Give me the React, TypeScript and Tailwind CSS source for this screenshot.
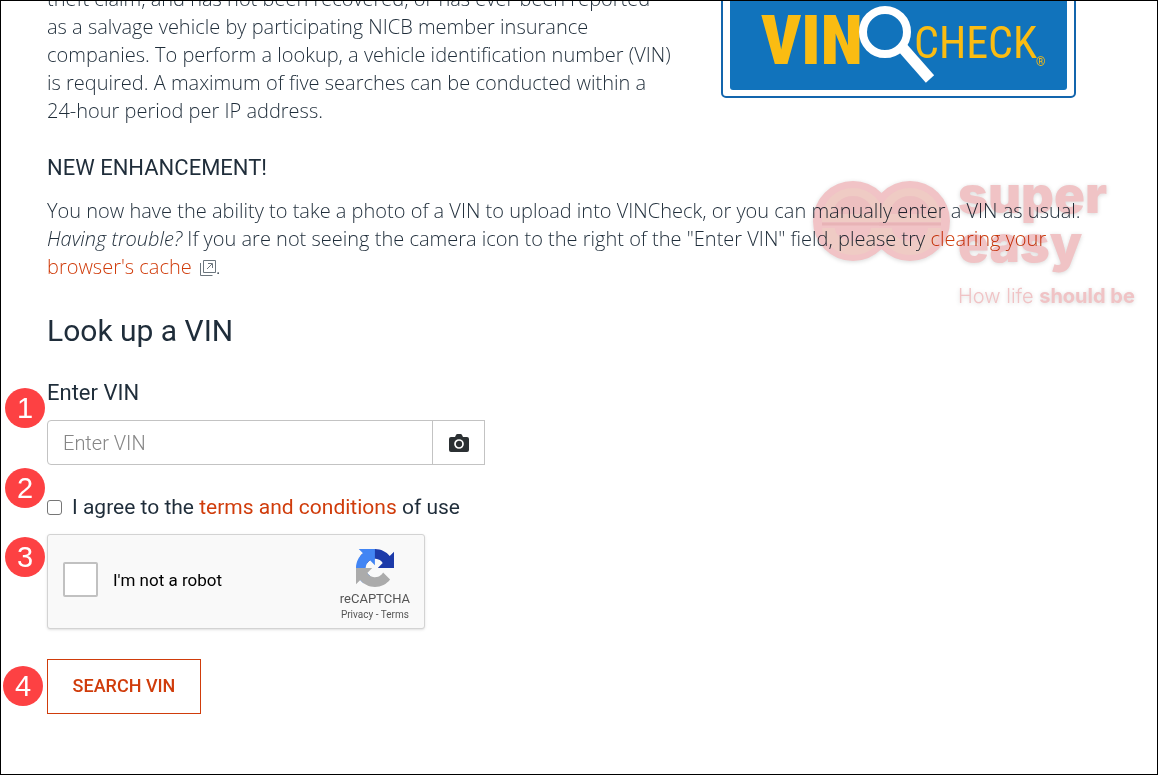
import type { ReactNode } from "react";

const Badge = ({ className, children }: { className: string; children: ReactNode }) => (
  <span
    className={`absolute flex h-10 w-10 items-center justify-center rounded-full bg-[#fd4143] font-['Liberation_Sans',sans-serif] text-[29px] leading-none text-white ${className}`}
  >
    {children}
  </span>
);

const VinCheckLogo = () => (
  <svg className="h-[114px] w-[355px] shrink-0" viewBox="0 -16 355 114" role="img" aria-label="VINCheck">
    <rect x="1" y="-40" width="353" height="136" rx="4" fill="#fff" stroke="#1365ad" strokeWidth="2" />
    <rect x="9" y="-40" width="337" height="129" rx="3" fill="#1173bc" />
    <g fill="#fabc12" fontFamily="'Roboto Condensed', sans-serif">
      <text x="40" y="63" fontSize="69" fontWeight="900">VIN</text>
      <text x="193" y="57" fontSize="44" fontWeight="400">CHECK</text>
      <text x="315" y="65" fontSize="12">®</text>
    </g>
    <path d="M180 45l29 33" stroke="#fff" strokeWidth="11" />
    <circle cx="164" cy="31" r="22" fill="#1173bc" stroke="#fff" strokeWidth="8" />
  </svg>
);

const Eye = ({ cx }: { cx: number }) => (
  <g transform={`translate(${cx} 42)`}>
    <path d="M-31 -2a31 30 0 0 1 62 0v4h-62z" fill="#efcbc4" />
    <path d="M-20 -6a20 18 0 0 1 40 0z" fill="#edbfc0" />
    <path d="M-31 8h13a18 13 0 0 0 36 0h13a31 27 0 0 1 -62 0z" fill="#efcbc4" />
    <path d="M-31 4h62" stroke="#e8b3b6" strokeWidth="3" />
  </g>
);

const Watermark = () => (
  <svg
    className="pointer-events-none absolute right-[12px] top-[177px] h-[136px] w-[333px] mix-blend-multiply drop-shadow-sm"
    viewBox="0 0 333 136"
    aria-hidden="true"
  >
    <g fill="#f1c3c6">
      <circle cx="41" cy="43" r="40" />
      <circle cx="98" cy="43" r="40" />
    </g>
    <Eye cx={41} />
    <Eye cx={98} />
    <g fill="#f0c3c5" fontFamily="Inter, sans-serif">
      <text x="146" y="35" fontSize="51" fontWeight="900">super</text>
      <text x="146" y="84" fontSize="51" fontWeight="900">easy</text>
      <text x="146" y="125" fontSize="20" fontWeight="300">
        How life <tspan fontWeight="700">should be</tspan>
      </text>
    </g>
  </svg>
);

const ExternalIcon = () => (
  <svg className="ml-2 inline h-4 w-4 -translate-y-px" viewBox="0 0 16 16" fill="none" stroke="#6b757d" aria-hidden="true">
    <path d="M3.500 .5h12v12h-12z" />
    <path d="M.5 3v12.500h12M7 9l5-5M8 3.500h4.500v4.500" />
  </svg>
);

const CameraIcon = () => (
  <svg className="h-[18px] w-5" viewBox="0 0 20 18" aria-hidden="true">
    <path d="M2 3h4l1-2q.4-1 1.500-1h3q1.100 0 1.500 1l1 2h4q2 0 2 2v11q0 2-2 2h-16q-2 0-2-2v-11q0-2 2-2z" fill="#2b3033" />
    <circle cx="10" cy="10" r="4" fill="none" stroke="#fff" strokeWidth="1.700" />
  </svg>
);

const RecaptchaLogo = () => (
  <svg className="h-[38px] w-[38px]" viewBox="0 0 64 64" aria-hidden="true">
    <path fill="#1c3aa9" d="M64 31.955l-.033-1.370V4.687l-7.160 7.160C50.948 4.674 42.033.093 32.050.093c-10.400 0-19.622 4.960-25.458 12.640l11.736 11.860a15.550 15.550 0 0 1 4.754-5.334c2.050-1.600 4.952-2.906 8.968-2.906.485 0 .860.057 1.135.163 4.976.393 9.288 3.140 11.828 7.124l-8.307 8.307L64 31.953" />
    <path fill="#4285f4" d="M31.862.094l-1.370.033H4.594l7.160 7.160C4.580 13.147 0 22.060 0 32.046c0 10.400 4.960 19.622 12.640 25.458L24.500 45.768a15.550 15.550 0 0 1-5.334-4.754c-1.600-2.050-2.906-4.952-2.906-8.968 0-.485.057-.860.163-1.135.393-4.976 3.140-9.288 7.124-11.828l8.307 8.307L31.860.095" />
    <path fill="#ababab" d="M.001 32.045l.033 1.370v25.898l7.160-7.160c5.860 7.173 14.774 11.754 24.760 11.754 10.400 0 19.622-4.960 25.458-12.640l-11.736-11.860a15.550 15.550 0 0 1-4.754 5.334c-2.050 1.600-4.952 2.906-8.968 2.906-.485 0-.860-.057-1.135-.163-4.976-.393-9.288-3.140-11.828-7.124l8.307-8.307c-10.522.040-22.400.066-27.295-.005" />
  </svg>
);

const App = () => {
  return (
    <div className="relative min-h-screen overflow-hidden border border-black bg-white font-['Roboto',sans-serif] text-[20px] leading-7 text-[#1f2d3a]">
      <main className="-mt-4 px-[46px] pb-10">
        <section className="flex items-start gap-11">
          <p className="w-[630px] font-['Open_Sans',sans-serif] font-light">
            theft claim, and has not been recovered, or has ever been reported<br />
            as a salvage vehicle by participating NICB member insurance<br />
            companies. To perform a lookup, a vehicle identification number (VIN)<br />
            is required. A maximum of five searches can be conducted within a<br />
            24-hour period per IP address.
          </p>
          <VinCheckLogo />
        </section>

        <h3 className="mt-[29px] text-[22px]">NEW ENHANCEMENT!</h3>
        <p className="mt-[15px] font-['Open_Sans',sans-serif] font-light">
          You now have the ability to take a photo of a VIN to upload into VINCheck, or you can manually enter a VIN as usual.<br />
          <em>Having trouble?</em> If you are not seeing the camera icon to the right of the "Enter VIN" field, please try{" "}
          <a href="#cache" className="text-[#d03c0b]">
            clearing your<br />browser's cache
          </a>
          <ExternalIcon />.
        </p>

        <h2 className="mt-8 text-[30px] leading-9">Look up a VIN</h2>

        <form>
          <div className="relative mt-[30px]">
            <Badge className="-left-[42px] top-[9px]">1</Badge>
            <label htmlFor="vin" className="block text-[22px]">Enter VIN</label>
            <div className="mt-[13px] flex h-[45px] w-[438px]">
              <input
                id="vin"
                type="text"
                placeholder="Enter VIN"
                className="min-w-0 flex-1 rounded-l-[4px] border border-[#c3c3c3] px-[15px] font-light placeholder:text-[#868686]"
              />
              <button type="button" aria-label="Take a photo" className="-ml-px flex w-[53px] items-center justify-center border border-[#c3c3c3]">
                <CameraIcon />
              </button>
            </div>
          </div>

          <div className="relative mt-7 flex items-center">
            <Badge className="-left-[42px] -top-[25px]">2</Badge>
            <input id="agree" type="checkbox" className="mr-[10px] h-[15px] w-[15px] appearance-none rounded-[3px] border border-[#767676] bg-white" />
            <label htmlFor="agree" className="text-[21px]">
              I agree to the <a href="#terms" className="text-[#d03c0b]">terms and conditions</a> of use
            </label>
          </div>

          <div className="relative mt-[13px] w-[378px]">
            <Badge className="-left-[42px] top-[3px]">3</Badge>
            <div className="flex h-[95px] items-center rounded-[3px] border border-[#d3d3d3] bg-[#f9f9f9] pb-1 pl-[15px] pr-[14px] shadow-sm">
              <input id="robot" type="checkbox" className="h-[35px] w-[35px] appearance-none rounded-[2px] border-2 border-[#c1c1c1] bg-white" />
              <label htmlFor="robot" className="ml-[15px] text-[17px] text-black">I'm not a robot</label>
              <div className="ml-auto flex flex-col items-center pt-3 text-[#555555]">
                <RecaptchaLogo />
                <span className="mt-1 text-[13px] leading-4">reCAPTCHA</span>
                <span className="text-[10px] leading-4">
                  <a href="#privacy">Privacy</a> - <a href="#recaptcha-terms">Terms</a>
                </span>
              </div>
            </div>
          </div>

          <div className="relative mt-[30px]">
            <Badge className="-left-[44px] top-[7px]">4</Badge>
            <button type="button" className="h-[55px] w-[154px] border border-[#d03c0b] pb-0.5 text-[18px] font-medium text-[#d03c0b]">
              SEARCH VIN
            </button>
          </div>
        </form>
      </main>
      <Watermark />
    </div>
  );
};

export default App;
